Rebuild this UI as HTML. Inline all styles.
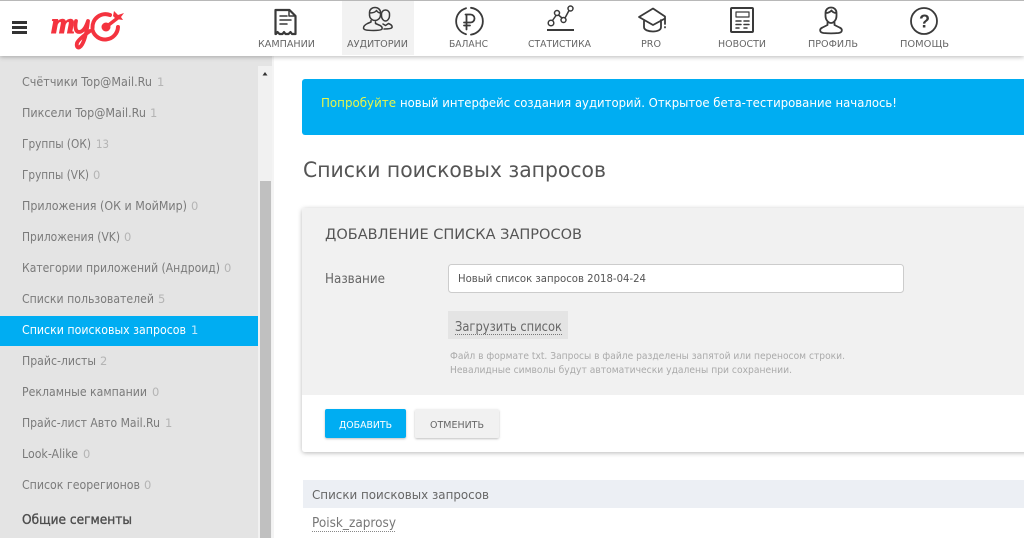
<!DOCTYPE html>
<html lang="ru"><head><meta charset="utf-8"><title>Списки поисковых запросов</title>
<style>
html,body{margin:0;padding:0;width:1024px;height:538px;overflow:hidden;background:#fff}
svg{display:block}
text{font-family:"DejaVu Sans","Liberation Sans",sans-serif;fill:#6e6e6e;font-size:12px}
.n{fill:#666;font-size:10px}
.s{fill:#7a7a7a;font-size:12px}
.c{fill:#b4b4b4;font-size:11.500px}
.i{fill:none;stroke:#3a3a3a;stroke-width:2;stroke-linecap:round;stroke-linejoin:round}
</style></head><body>
<svg width="1024" height="538" viewBox="0 0 1024 538" xmlns="http://www.w3.org/2000/svg">
<defs>
<filter id="sh" x="-5%" y="-10%" width="110%" height="120%"><feDropShadow dx="0" dy="1" stdDeviation="2.500" flood-color="#000" flood-opacity=".28"/></filter>
<filter id="sb" x="-10%" y="-20%" width="120%" height="140%"><feDropShadow dx="0" dy="1" stdDeviation="1" flood-color="#000" flood-opacity=".25"/></filter>
</defs>
<rect width="1024" height="538" fill="#fff"/>
<!-- sidebar -->
<rect x="0" y="56" width="273" height="482" fill="#e4e4e4"/>
<rect x="258" y="66" width="15" height="472" fill="#f1f1f1"/>
<rect x="260" y="181" width="11" height="357" fill="#c0c0c0"/>
<path d="M262.500 75.500h5l-2.500-3.500z" fill="#333"/>
<rect x="272" y="56" width="2" height="482" fill="#f4f4f4"/>
<rect x="0" y="316" width="258" height="30" fill="#00adf2"/>
<text class="s" x="22" y="86" textLength="130" lengthAdjust="spacingAndGlyphs">Счётчики Top@Mail.Ru</text><text class="c" x="157" y="86">1</text>
<text class="s" x="22" y="117" textLength="124" lengthAdjust="spacingAndGlyphs">Пиксели Top@Mail.Ru</text><text class="c" x="150" y="117">1</text>
<text class="s" x="22" y="148" textLength="69" lengthAdjust="spacingAndGlyphs">Группы (ОК)</text><text class="c" x="96" y="148" textLength="13" lengthAdjust="spacingAndGlyphs">13</text>
<text class="s" x="22" y="179" textLength="67" lengthAdjust="spacingAndGlyphs">Группы (VK)</text><text class="c" x="93" y="179">0</text>
<text class="s" x="22" y="210" textLength="165" lengthAdjust="spacingAndGlyphs">Приложения (ОК и МойМир)</text><text class="c" x="191" y="210">0</text>
<text class="s" x="22" y="241" textLength="98" lengthAdjust="spacingAndGlyphs">Приложения (VK)</text><text class="c" x="124" y="241">0</text>
<text class="s" x="22" y="272" textLength="198" lengthAdjust="spacingAndGlyphs">Категории приложений (Андроид)</text><text class="c" x="224" y="272">0</text>
<text class="s" x="22" y="303" textLength="132" lengthAdjust="spacingAndGlyphs">Списки пользователей</text><text class="c" x="158" y="303">5</text>
<text x="22" y="334" textLength="164" lengthAdjust="spacingAndGlyphs" style="fill:#fff">Списки поисковых запросов</text><text x="191" y="334" style="fill:#bfe9fb;font-size:11.500px">1</text>
<text class="s" x="22" y="365" textLength="74" lengthAdjust="spacingAndGlyphs">Прайс-листы</text><text class="c" x="100" y="365">2</text>
<text class="s" x="22" y="396" textLength="125" lengthAdjust="spacingAndGlyphs">Рекламные кампании</text><text class="c" x="152" y="396">0</text>
<text class="s" x="22" y="427" textLength="138" lengthAdjust="spacingAndGlyphs">Прайс-лист Авто Mail.Ru</text><text class="c" x="165" y="427">1</text>
<text class="s" x="22" y="458" textLength="56" lengthAdjust="spacingAndGlyphs">Look-Alike</text><text class="c" x="83" y="458">0</text>
<text class="s" x="22" y="489" textLength="118" lengthAdjust="spacingAndGlyphs">Список георегионов</text><text class="c" x="144" y="489">0</text>
<text x="22" y="524" textLength="110" lengthAdjust="spacingAndGlyphs" style="fill:#4d4d4d;stroke:#4d4d4d;stroke-width:.35;font-size:13px">Общие сегменты</text>
<!-- top bar -->
<rect x="0" y="0" width="1024" height="56" fill="#fff" filter="url(#sh)"/>
<rect x="0" y="0" width="1024" height="1" fill="#b8b8b8"/>
<rect x="342" y="1" width="72" height="54" fill="#f2f2f2"/>
<!-- burger -->
<rect x="12" y="21" width="15" height="3" fill="#333"/><rect x="12" y="26" width="15" height="3" fill="#333"/><rect x="12" y="31" width="15" height="3" fill="#333"/>
<!-- logo -->
<text x="51" y="33" textLength="24" lengthAdjust="spacingAndGlyphs" style="font-family:'Liberation Serif',serif;font-style:italic;font-weight:bold;font-size:30px;fill:#f4333f;stroke:#f4333f;stroke-width:1">m</text>
<path d="M76 21c-1 5-1 11 3 11 4 0 7-5 9-11M88 21c-1 9-3 20-7 25-3 3-5 1-4-3 1-3 6-7 13-12" fill="none" stroke="#f4333f" stroke-width="3.800" stroke-linecap="round" stroke-linejoin="round"/>
<path d="M110 15A13 13 0 0 0 92.500 28M92.500 30A13 13 0 0 0 118 27" fill="none" stroke="#f4333f" stroke-width="4" stroke-linecap="round"/>
<circle cx="106" cy="27" r="4.500" fill="#f4333f"/>
<path d="M106 27L119 17" stroke="#f4333f" stroke-width="3.500"/>
<path d="M114 11l4 4 6-2-3 4 2 3-7-1-3-3z" fill="#f4333f"/>
<!-- nav icons -->
<path class="i" d="M275.500 10h14l6 6v18h-3.500l-1.500-2-2 2h-3l-1.500-2-1.500 2h-3l-2-2-1.500 2h-.5z" style="stroke-width:2.200"/>
<path class="i" d="M289 10v6h6" style="stroke-width:1.500"/>
<path class="i" d="M280 16h7M280 20h11M280 24h7" style="stroke-width:1.500"/>
<g class="i" style="stroke-width:1.500">
<path d="M375 7.500c-3 0-5.500 2-5.500 5v2.500c0 3 2.500 5.500 5.500 5.500s5.500-2.500 5.500-5.500v-2.500c0-3-2.500-5-5.500-5zM369.500 13c3 0 6-1 7-2.500 1 1.500 2.500 2.500 4 2.500M371 20.500v1.500l-3.500 1.500c-3 1.500-4 3-4 4.500 0 1.500 2 2.500 10 2.500 5 0 8-.5 8.500-1.500.5-1.500-.5-3-3-4l-3.500-1.500v-1.500"/>
<path d="M385.500 10c-2.500 0-4 2-4 4v2c0 2.500 2 5 4 5s4-2.500 4-5v-2c0-2-1.500-4-4-4zM383 24l2.500 1.500 3-2c2.500 1 4 2.500 3.500 4-.5 1-3 1.500-8 1.500"/>
</g>
<g class="i" style="stroke-width:1.800">
<path d="M471 7.800A13.500 13.500 0 0 1 471 34.600M466 34.200A13.500 13.500 0 0 1 466 8.200"/>
<path d="M465.500 14.500h5a4 4 0 0 1 0 8h-5M466.500 14.500v15M464 22.500h6M464 25.500h6"/>
</g>
<g class="i" style="stroke-width:1.500">
<circle cx="551" cy="23" r="2.800"/><circle cx="557" cy="13" r="2.500"/><circle cx="563.500" cy="20" r="2.500"/><circle cx="570.500" cy="8.500" r="2.500"/>
<path d="M552.500 20.500l3.500-5M558.500 15l3.500 3M565 18l4-7.500"/>
</g>
<rect x="547" y="29" width="27" height="2" fill="#3a3a3a"/>
<g class="i" style="stroke-width:1.800">
<path d="M653 8.500L639 17l14 8 12-6.500v-2zM644 21v6c0 3 4.500 4.500 9 4.500s8-1.500 8-4.500v-7"/>
<path d="M665 19v5M665 27v.500"/>
</g>
<g class="i">
<rect x="731" y="8" width="22" height="24" rx="1"/>
<rect x="736" y="12" width="13" height="5" style="stroke-width:1.200"/>
<path d="M736 21h5M744 21h5M736 24.500h5M744 24.500h5M736 28h3M744 28h3" style="stroke-width:1.500"/>
</g>
<g class="i" style="stroke-width:1.800">
<path d="M831 7.500c-3 0-5.500 2-5.500 5.500v3c0 3.500 2.500 7 5.500 7s5.500-3.500 5.500-7v-3c0-3.500-2.500-5.500-5.500-5.500zM826 13c2.500 0 4-1 5.500-2.500 1 1.500 3 2.500 5 2.500M827.500 22.500v2.500l-5 2.500c-3.500 1.500-3 5 1 5.500 5 .5 10 .5 15 0 4-.5 4.500-4 1-5.500l-5-2.500v-2.500"/>
</g>
<circle class="i" cx="924" cy="21" r="13" style="stroke-width:1.800"/>
<text x="919" y="27.500" style="font-family:'Liberation Sans',sans-serif;font-size:18px;font-weight:bold;fill:#3a3a3a">?</text>
<!-- nav labels -->
<text class="n" x="258" y="47" textLength="57" lengthAdjust="spacingAndGlyphs">КАМПАНИИ</text>
<text class="n" x="347" y="47" textLength="61" lengthAdjust="spacingAndGlyphs">АУДИТОРИИ</text>
<text class="n" x="449" y="47" textLength="39" lengthAdjust="spacingAndGlyphs">БАЛАНС</text>
<text class="n" x="528" y="47" textLength="63" lengthAdjust="spacingAndGlyphs">СТАТИСТИКА</text>
<text class="n" x="641" y="47" textLength="20" lengthAdjust="spacingAndGlyphs">PRO</text>
<text class="n" x="718" y="47" textLength="48" lengthAdjust="spacingAndGlyphs">НОВОСТИ</text>
<text class="n" x="808" y="47" textLength="50" lengthAdjust="spacingAndGlyphs">ПРОФИЛЬ</text>
<text class="n" x="900" y="47" textLength="49" lengthAdjust="spacingAndGlyphs">ПОМОЩЬ</text>
<!-- banner -->
<path d="M1024 79H305a3 3 0 0 0-3 3v50a3 3 0 0 0 3 3h719z" fill="#00adf2"/>
<text x="321" y="107" textLength="75" lengthAdjust="spacingAndGlyphs" style="fill:#e6f54a;font-size:12.500px">Попробуйте</text>
<text x="400" y="107" textLength="497" lengthAdjust="spacingAndGlyphs" style="fill:#fff;font-size:12.500px">новый интерфейс создания аудиторий. Открытое бета-тестирование началось!</text>
<text x="303" y="177" textLength="303" lengthAdjust="spacingAndGlyphs" style="fill:#555;font-size:21px">Списки поисковых запросов</text>
<!-- card -->
<rect x="302" y="208" width="760" height="244" rx="3" fill="#fff" filter="url(#sh)"/>
<path d="M1024 208H305a3 3 0 0 0-3 3v184h722z" fill="#f1f1f1"/>
<text x="325" y="239" textLength="257" lengthAdjust="spacingAndGlyphs" style="fill:#555;font-size:14.500px">ДОБАВЛЕНИЕ СПИСКА ЗАПРОСОВ</text>
<text x="325" y="283" textLength="60" lengthAdjust="spacingAndGlyphs" style="fill:#666;font-size:13px">Название</text>
<rect x="448.500" y="264.500" width="455" height="28" rx="3" fill="#fff" stroke="#ccc"/>
<text x="458" y="282" textLength="188" lengthAdjust="spacingAndGlyphs" style="fill:#555;font-size:11px">Новый список запросов 2018-04-24</text>
<rect x="448" y="311" width="120" height="28" fill="#e4e4e4"/>
<text x="455" y="331" textLength="107" lengthAdjust="spacingAndGlyphs" style="fill:#666;font-size:13px">Загрузить список</text>
<path d="M455 334.500h107" stroke="#777" stroke-dasharray="1 1"/>
<text x="450" y="359" textLength="395" lengthAdjust="spacingAndGlyphs" style="fill:#aaa;font-size:9.500px">Файл в формате txt. Запросы в файле разделены запятой или переносом строки.</text>
<text x="450" y="373" textLength="342" lengthAdjust="spacingAndGlyphs" style="fill:#aaa;font-size:9.500px">Невалидные символы будут автоматически удалены при сохранении.</text>
<rect x="325" y="409" width="81" height="29" rx="2" fill="#00adf2" filter="url(#sb)"/>
<text x="339" y="428" textLength="53" lengthAdjust="spacingAndGlyphs" style="fill:#fff;font-size:10px">ДОБАВИТЬ</text>
<rect x="415" y="409" width="84" height="29" rx="2" fill="#f1f1f1" filter="url(#sb)"/>
<text x="430" y="428" textLength="54" lengthAdjust="spacingAndGlyphs" style="fill:#666;font-size:10px">ОТМЕНИТЬ</text>
<!-- table -->
<rect x="303" y="480" width="721" height="28" fill="#eceff4"/>
<text x="312" y="499" textLength="177" lengthAdjust="spacingAndGlyphs" style="fill:#666;font-size:12.500px">Списки поисковых запросов</text>
<text x="312" y="527" textLength="84" lengthAdjust="spacingAndGlyphs" style="fill:#777;font-size:13px">Poisk_zaprosy</text>
<path d="M312 531.500h84" stroke="#888" stroke-dasharray="1 1"/>
</svg>
</body></html>
